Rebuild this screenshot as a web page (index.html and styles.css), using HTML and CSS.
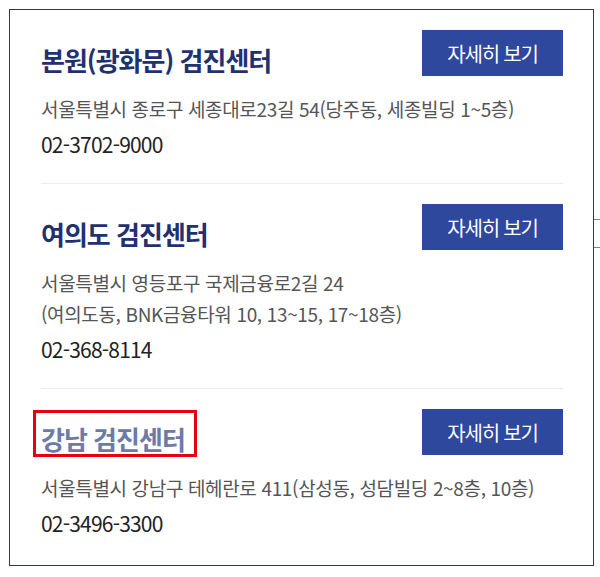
FILE: index.html
```html
<!DOCTYPE html>
<html lang="ko">
<head>
<meta charset="utf-8">
<link rel="stylesheet" href="styles.css">
</head>
<body>
<div class="box">
  <div class="center">
    <div class="head">
      <h2 class="title">본원(광화문) 검진센터</h2>
      <a class="btn">자세히 보기</a>
    </div>
    <p class="addr">서울특별시 종로구 세종대로23길 54(당주동, 세종빌딩 1~5층)</p>
    <p class="tel">02-3702-9000</p>
  </div>
  <div class="center">
    <div class="head">
      <h2 class="title">여의도 검진센터</h2>
      <a class="btn">자세히 보기</a>
    </div>
    <p class="addr">서울특별시 영등포구 국제금융로2길 24<br>(여의도동, BNK금융타워 10, 13~15, 17~18층)</p>
    <p class="tel">02-368-8114</p>
  </div>
  <div class="center last">
    <div class="head">
      <h2 class="title light"><span class="mark-wrap">강남 검진센터<span class="mark"></span></span></h2>
      <a class="btn">자세히 보기</a>
    </div>
    <p class="addr">서울특별시 강남구 테헤란로 411(삼성동, 성담빌딩 2~8층, 10층)</p>
    <p class="tel">02-3496-3300</p>
  </div>
  <span class="gap"></span>
</div>
</body>
</html>
```

FILE: styles.css
```css
* { box-sizing: border-box; }
html, body { margin: 0; padding: 0; background: #fff; }
body {
  padding: 9px 0 0 9px;
  font-family: "Noto Sans CJK KR", "Noto Sans", sans-serif;
}
.box {
  position: relative;
  width: 585px;
  height: 557px;
  border: 1px solid #2f3945;
  padding: 0 30px 0 31px;
}
.center {
  padding: 20px 0 23px;
  border-bottom: 1px solid #ececec;
}
.center.last { border-bottom: none; }
.head {
  display: flex;
  justify-content: space-between;
  align-items: flex-start;
}
.title {
  margin: 13px 0 0;
  font-size: 26px;
  line-height: 34px;
  font-weight: 700;
  color: #1f3170;
  letter-spacing: -1px;
}
.title.light { color: #6d7aa7; }
.mark-wrap { position: relative; display: inline-block; }
.mark {
  position: absolute;
  left: -8px;
  right: -12px;
  top: -12px;
  bottom: -1px;
  border: 3px solid #e60012;
}
.btn {
  display: flex;
  align-items: center;
  justify-content: center;
  width: 141px;
  height: 46px;
  background: #2e489d;
  color: #fff;
  font-size: 20px;
  letter-spacing: -1.2px;
}
.addr {
  margin: 16px 0 0;
  font-size: 19px;
  line-height: 31px;
  color: #555;
  letter-spacing: -0.35px;
}
.tel {
  margin: 5px 0 0;
  font-size: 21px;
  line-height: 31px;
  color: #222;
  letter-spacing: -0.8px;
}
.gap {
  position: absolute;
  right: -9px;
  top: 209px;
  width: 8px;
  height: 29px;
  background: #fff;
  border-top: 1px solid #7d848c;
  border-bottom: 1px solid #7d848c;
}
```
